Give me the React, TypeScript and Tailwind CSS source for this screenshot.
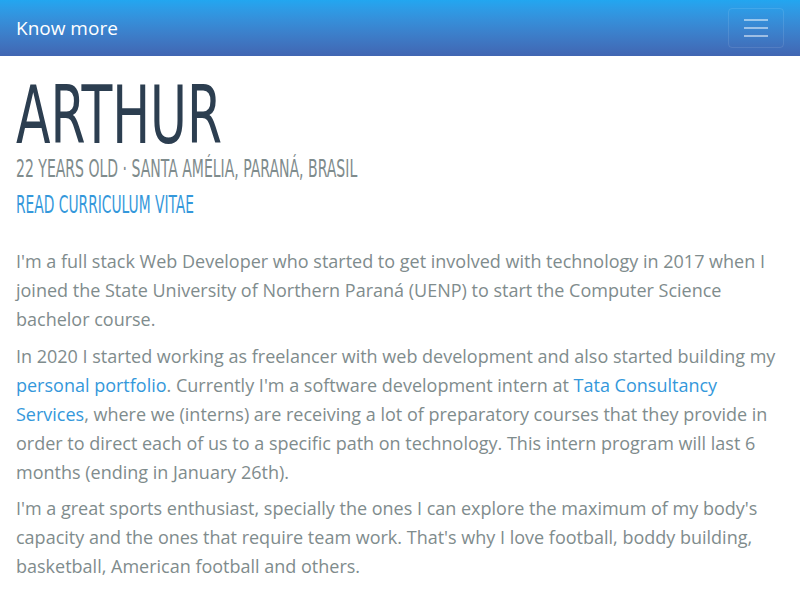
import React from "react";

export default function App() {
  return (
    <div className="min-h-[600px] bg-white">
      <nav className="h-14 flex items-center justify-between px-4 bg-gradient-to-b from-[#22a6f0] to-[#4166b2]">
        <span className="text-white text-[19px] font-['Open_Sans',sans-serif]">Know more</span>
        <button className="w-[56px] h-[40px] rounded border border-white/10 flex flex-col items-center justify-center gap-[6px]">
          <span className="block w-6 h-[2px] bg-white/50"></span>
          <span className="block w-6 h-[2px] bg-white/50"></span>
          <span className="block w-6 h-[2px] bg-white/50"></span>
        </button>
      </nav>
      <section className="px-4 pt-5">
        <div className="font-['Liberation_Sans_Narrow','DejaVu_Sans_Condensed',sans-serif]">
          <h1 className="text-[80px] leading-none text-[#2c3e50] uppercase origin-left scale-x-[0.7]">Arthur</h1>
          <div className="text-[24px] leading-tight text-[#7f8c8d] uppercase mt-[-2px] origin-left scale-x-[0.65]">22 years old · Santa Amélia, Paraná, Brasil</div>
          <div className="text-[24px] leading-tight text-[#3498db] uppercase mt-[6px] origin-left scale-x-[0.64]">Read curriculum vitae</div>
        </div>
        <div className="mt-[27px] font-['Open_Sans',sans-serif] text-[18px] leading-[29px] text-[#7f8c8d]">
          <p className="mb-2">I'm a full stack Web Developer who started to get involved with technology in 2017 when I joined the State University of Northern Paraná (UENP) to start the Computer Science bachelor course.</p>
          <p className="mb-[7px]">In 2020 I started working as freelancer with web development and also started building my <a className="text-[#3498db]">personal portfolio</a>. Currently I'm a software development intern at <a className="text-[#3498db]">Tata Consultancy Services</a>, where we (interns) are receiving a lot of preparatory courses that they provide in order to direct each of us to a specific path on technology. This intern program will last 6 months (ending in January 26th).</p>
          <p className="mb-2">I'm a great sports enthusiast, specially the ones I can explore the maximum of my body's capacity and the ones that require team work. That's why I love football, boddy building, basketball, American football and others.</p>
        </div>
      </section>
    </div>
  );
}
